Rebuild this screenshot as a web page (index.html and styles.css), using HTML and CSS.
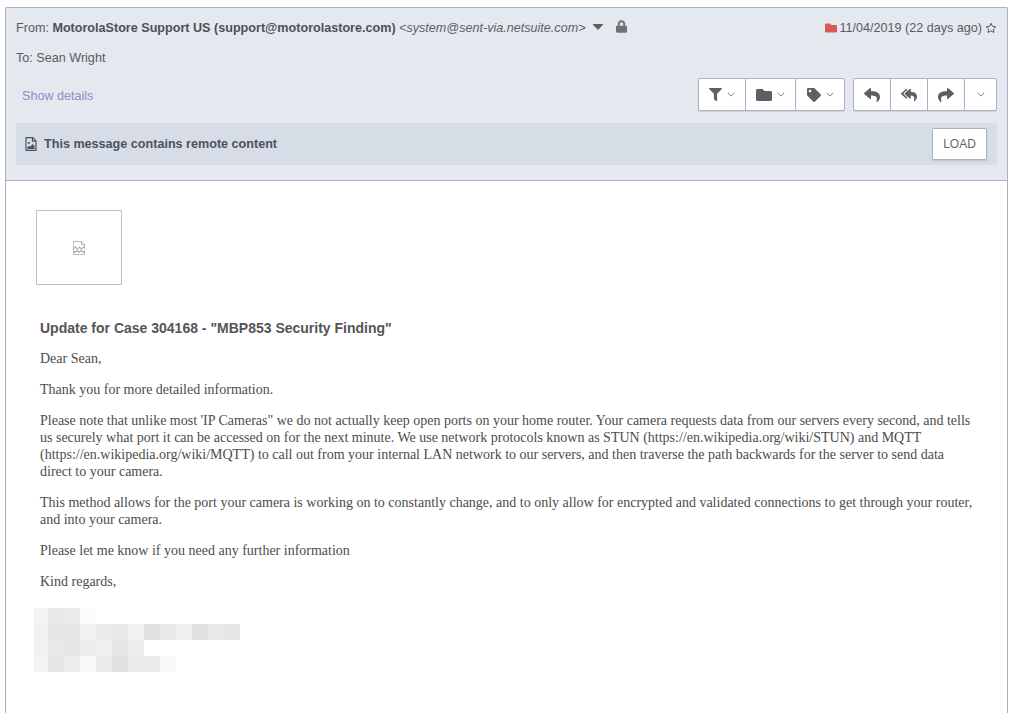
FILE: index.html
```html
<!DOCTYPE html>
<html lang="en">
<head>
<meta charset="utf-8">
<title>Message</title>
<link rel="stylesheet" href="styles.css">
</head>
<body>
<main class="message">
  <header class="head">
    <div class="row-from">
      <div class="from">
        <span class="label">From:</span>
        <strong>MotorolaStore Support US (support@motorolastore.com)</strong>
        <em>&lt;system@sent-via.netsuite.com&gt;</em>
        <svg class="i-caret" viewBox="0 0 10 6"><path d="M.6 0h8.800c.5 0 .8.6.4 1L5.400 5.600a.6.6 0 0 1-.8 0L.2 1C-.2.6.1 0 .6 0z"/></svg>
        <svg class="i-lock" viewBox="0 0 448 512"><path d="M400 224h-24v-72C376 68.200 307.800 0 224 0S72 68.200 72 152v72H48c-26.500 0-48 21.500-48 48v192c0 26.500 21.500 48 48 48h352c26.500 0 48-21.500 48-48V272c0-26.500-21.500-48-48-48zm-104 0H152v-72c0-39.700 32.300-72 72-72s72 32.300 72 72v72z"/></svg>
      </div>
      <div class="date">
        <svg class="i-folder-red" viewBox="0 0 512 512"><path d="M464 128H272l-64-64H48C21.490 64 0 85.490 0 112v288c0 26.510 21.490 48 48 48h416c26.510 0 48-21.490 48-48V176c0-26.510-21.490-48-48-48z"/></svg>
        <span>11/04/2019 (22 days ago)</span>
        <svg class="i-star" viewBox="0 0 24 24"><path d="M12 2.500l2.900 6.200 6.700.9-4.900 4.700 1.200 6.700-5.900-3.300-5.900 3.300 1.200-6.700-4.900-4.700 6.700-.9z"/></svg>
      </div>
    </div>
    <div class="row-to"><span class="label">To:</span> Sean Wright</div>
    <div class="row-tools">
      <a class="details">Show details</a>
      <div class="toolbar">
        <div class="group">
          <button class="btn btn-filter"><svg class="ic ic-filter" viewBox="0 0 512 512"><path d="M487.976 0H24.028C2.710 0-8.047 25.866 7.058 40.971L192 225.941V432c0 7.831 3.821 15.170 10.237 19.662l80 55.980C298.020 518.690 320 507.493 320 487.980V225.941l184.947-184.970C520.021 25.896 509.338 0 487.976 0z"/></svg><svg class="chev" viewBox="0 0 10 6"><path d="M1 1l4 4 4-4"/></svg></button>
          <button class="btn btn-folder"><svg class="ic ic-folder" viewBox="0 0 512 512"><path d="M464 128H272l-64-64H48C21.490 64 0 85.490 0 112v288c0 26.510 21.490 48 48 48h416c26.510 0 48-21.490 48-48V176c0-26.510-21.490-48-48-48z"/></svg><svg class="chev" viewBox="0 0 10 6"><path d="M1 1l4 4 4-4"/></svg></button>
          <button class="btn btn-tag"><svg class="ic" viewBox="0 0 512 512"><path d="M0 252.118V48C0 21.490 21.490 0 48 0h204.118a48 48 0 0 1 33.941 14.059l211.882 211.882c18.745 18.745 18.745 49.137 0 67.882L293.823 497.941c-18.745 18.745-49.137 18.745-67.882 0L14.059 286.059A48 48 0 0 1 0 252.118zM112 64c-26.510 0-48 21.490-48 48s21.490 48 48 48 48-21.490 48-48-21.490-48-48-48z"/></svg><svg class="chev" viewBox="0 0 10 6"><path d="M1 1l4 4 4-4"/></svg></button>
        </div>
        <div class="group">
          <button class="btn btn-act"><svg class="ic ic-l" viewBox="0 0 512 512"><path d="M8.309 189.836L184.313 37.851C199.719 24.546 224 35.347 224 56.015v80.053c160.629 1.839 288 34.032 288 186.258 0 61.441-39.581 122.309-83.333 154.132-13.653 9.931-33.111-2.533-28.077-18.631 45.344-145.012-21.507-183.510-176.590-185.742V360c0 20.700-24.300 31.453-39.687 18.164l-176.004-152c-11.071-9.562-11.086-26.753 0-36.328z"/></svg></button>
          <button class="btn btn-act"><svg class="ic ic-l" viewBox="0 0 576 512"><path d="M136.309 189.836L312.313 37.851C327.720 24.546 352 35.348 352 56.015v82.763c129.182 10.231 224 52.212 224 183.548 0 61.441-39.582 122.309-83.333 154.132-13.653 9.931-33.111-2.533-28.077-18.631 38.512-123.162-3.922-169.482-112.590-182.015v84.175c0 20.701-24.300 31.453-39.687 18.164L136.309 226.164c-11.071-9.561-11.086-26.753 0-36.328zm-128 36.328L184.313 378.150C199.700 391.439 224 380.687 224 359.986v-15.818l-108.606-93.785A55.960 55.960 0 0 1 96 207.998a55.953 55.953 0 0 1 19.393-42.380L224 71.832V56.015c0-20.667-24.280-31.469-39.687-18.164L8.309 189.836c-11.086 9.575-11.071 26.767 0 36.328z"/></svg></button>
          <button class="btn btn-act"><svg class="ic ic-l" viewBox="0 0 512 512"><path d="M503.691 189.836L327.687 37.851C312.281 24.546 288 35.347 288 56.015v80.053C127.371 137.907 0 170.100 0 322.326c0 61.441 39.581 122.309 83.333 154.132 13.653 9.931 33.111-2.533 28.077-18.631C66.066 312.814 132.917 274.316 288 272.085V360c0 20.700 24.300 31.453 39.687 18.164l176.004-152c11.071-9.562 11.086-26.753 0-36.328z"/></svg></button>
          <button class="btn btn-more"><svg class="chev" viewBox="0 0 10 6"><path d="M1 1l4 4 4-4"/></svg></button>
        </div>
      </div>
    </div>
    <div class="banner">
      <div class="banner-text">
        <svg class="i-file" viewBox="0 0 12 14"><path class="f-o" d="M1 .6h6.700L11 3.900v9.500H1z"/><path class="f-o" d="M7.500.6v3.500H11"/><circle cx="3.900" cy="6" r="1.100"/><path d="M2.400 12v-1.800l1.600-1.500 1.100 1 2.500-2.600 1.900 2V12z"/></svg>
        <span>This message contains remote content</span>
      </div>
      <button class="load">LOAD</button>
    </div>
  </header>
  <section class="body">
    <div class="broken">
      <svg class="i-broken" viewBox="0 0 12 14" shape-rendering="crispEdges"><path d="M11.500 7V3.500L8.500.5H.5v7.500l2-2 2 2 2-2 2 2 2-2 1 1zM8.500.5v3h3M.5 10v3.500h11V10l-1.500 1.500-2-2-2 2-2-2-2 2z"/></svg>
    </div>
    <h2 class="subject">Update for Case 304168 - "MBP853 Security Finding"</h2>
    <p>Dear Sean,</p>
    <p>Thank you for more detailed information.</p>
    <p>Please note that unlike most 'IP Cameras" we do not actually keep open ports on your home router. Your camera requests data from our servers every second, and tells us securely what port it can be accessed on for the next minute. We use network protocols known as STUN (https://en.wikipedia.org/wiki/STUN) and MQTT (https://en.wikipedia.org/wiki/MQTT) to call out from your internal LAN network to our servers, and then traverse the path backwards for the server to send data direct to your camera.</p>
    <p>This method allows for the port your camera is working on to constantly change, and to only allow for encrypted and validated connections to get through your router, and into your camera.</p>
    <p>Please let me know if you need any further information</p>
    <p>Kind regards,</p>
    <svg class="redacted" viewBox="0 0 206 64" shape-rendering="crispEdges">
      <rect x="0" y="0" width="14" height="16" fill="#f3f3f3"/><rect x="14" y="0" width="16" height="16" fill="#e9e9e9"/><rect x="30" y="0" width="16" height="16" fill="#ebebeb"/><rect x="46" y="0" width="16" height="16" fill="#fbfbfb"/>
      <rect x="0" y="16" width="14" height="16" fill="#f2f2f2"/><rect x="14" y="16" width="16" height="16" fill="#e7e7e7"/><rect x="30" y="16" width="16" height="16" fill="#e5e5e5"/><rect x="46" y="16" width="16" height="16" fill="#f1f1f1"/><rect x="62" y="16" width="16" height="16" fill="#ebebeb"/><rect x="78" y="16" width="16" height="16" fill="#e9e9e9"/><rect x="94" y="16" width="16" height="16" fill="#f1f1f1"/><rect x="110" y="16" width="16" height="16" fill="#e2e2e2"/><rect x="126" y="16" width="16" height="16" fill="#e9e9e9"/><rect x="142" y="16" width="16" height="16" fill="#efefef"/><rect x="158" y="16" width="16" height="16" fill="#e1e1e1"/><rect x="174" y="16" width="16" height="16" fill="#e8e8e8"/><rect x="190" y="16" width="16" height="16" fill="#e6e6e6"/>
      <rect x="0" y="32" width="14" height="16" fill="#f2f2f2"/><rect x="14" y="32" width="16" height="16" fill="#e8e8e8"/><rect x="30" y="32" width="16" height="16" fill="#e6e6e6"/><rect x="46" y="32" width="16" height="16" fill="#eeeeee"/><rect x="62" y="32" width="16" height="16" fill="#f0f0f0"/><rect x="78" y="32" width="16" height="16" fill="#e7e7e7"/><rect x="94" y="32" width="16" height="16" fill="#ececec"/>
      <rect x="0" y="48" width="14" height="16" fill="#f4f4f4"/><rect x="14" y="48" width="16" height="16" fill="#e6e6e6"/><rect x="30" y="48" width="16" height="16" fill="#ececec"/><rect x="46" y="48" width="16" height="16" fill="#f8f8f8"/><rect x="62" y="48" width="16" height="16" fill="#ebebeb"/><rect x="78" y="48" width="16" height="16" fill="#e2e2e2"/><rect x="94" y="48" width="16" height="16" fill="#ebebeb"/><rect x="110" y="48" width="16" height="16" fill="#ebebeb"/><rect x="126" y="48" width="16" height="16" fill="#f8f8f8"/>
    </svg>
  </section>
</main>
</body>
</html>
```
FILE: styles.css
```css
* { box-sizing: border-box; }
html, body { margin: 0; height: 100%; overflow: hidden; background: #fff; }
body { padding: 7px 11px 0 5px; font-family: "Liberation Sans", Arial, sans-serif; font-size: 12.6px; color: #5a5a62; }
.message { border: 1px solid #adb0c3; border-bottom: 0; border-radius: 2px 2px 0 0; height: 720px; }
.head { background: #e4e8ef; border-bottom: 1px solid #adb0c3; height: 173px; padding: 0 10px; }
.row-from { display: flex; justify-content: space-between; height: 40px; padding-top: 11px; line-height: 18px; }
.from { display: flex; align-items: flex-start; gap: 3.5px; white-space: pre; }
.from strong { color: #4f4f5a; font-weight: 700; }
.from em { color: #5f5f68; font-style: italic; }
.i-caret { width: 10px; height: 6px; fill: #5f5f63; margin: 5px 0 0 4px; }
.i-lock { width: 11px; height: 13px; fill: #707075; margin: 1px 0 0 10px; }
.date { display: flex; align-items: center; gap: 3px; height: 18px; }
.date span { margin-left: -1px; }
.i-folder-red { width: 12px; height: 12px; fill: #d95858; }
.i-star { width: 12px; height: 12px; fill: none; stroke: #5a5a62; stroke-width: 2; }
.row-to { height: 20px; padding-top: 1px; line-height: 18px; }
.row-tools { display: flex; justify-content: space-between; align-items: flex-start; height: 45px; margin-top: 10px; padding-left: 6px; }
.details { color: #8e8ec9; line-height: 37px; }
.toolbar { display: flex; gap: 8px; }
.group { display: flex; height: 33px; background: #fff; border: 1px solid #adb0c3; border-radius: 2px; box-shadow: 0 1px 1px rgba(60, 60, 90, .15); }
.btn { display: flex; align-items: center; justify-content: center; gap: 5px; background: none; border: 0; border-left: 1px solid #adb0c3; padding: 0; height: 100%; }
.btn:first-child { border-left: 0; }
.btn-filter { width: 46px; }
.btn-folder { width: 50px; }
.btn-tag { width: 49px; }
.btn-act { width: 37px; }
.btn:first-child.btn-act { width: 36px; }
.btn-more { width: 32px; }
.ic { width: 14px; height: 14px; fill: #5f5f63; }
.ic-filter { width: 13px; height: 13px; }
.ic-folder { width: 16px; height: 16px; }
.ic-l { width: 16px; height: 16px; }
.chev { width: 8px; height: 5px; fill: none; stroke: #606068; stroke-width: 1; }
.banner { display: flex; justify-content: space-between; align-items: center; height: 42px; background: #d7dde7; border-radius: 2px; padding: 0 10px 0 9px; }
.banner-text { display: flex; align-items: center; gap: 7px; font-weight: 700; line-height: 14px; padding-bottom: 1px; color: #4f5060; }
.i-file { width: 12px; height: 14px; fill: #4f5060; margin-top: 1px; }
.f-o { fill: none; stroke: #4f5060; stroke-width: 1.2; }
.load { width: 55px; height: 32px; background: #fff; border: 1px solid #adb0c3; border-radius: 2px; font: 12px "Liberation Sans", Arial, sans-serif; color: #666; box-shadow: 0 1px 1px rgba(60, 60, 90, .15); padding: 0; }
.body { padding: 29px 30px 0 30px; background: #fff; }
.broken { display: flex; align-items: center; justify-content: center; width: 86px; height: 75px; border: 1px solid #c0c0c0; margin-bottom: 34px; }
.i-broken { width: 12px; height: 14px; fill: none; stroke: #bbb; stroke-width: 1; }
.subject { margin: 0 0 13px 4px; font: 700 14px/18px "Liberation Sans", Arial, sans-serif; color: #555; }
.body p { margin: 0 0 14px 4px; font: 14px/17px "Liberation Serif", "Times New Roman", serif; color: #4c4c4c; width: 936px; }
.redacted { display: block; width: 206px; height: 64px; margin: 18px 0 0 -2px; }
```
